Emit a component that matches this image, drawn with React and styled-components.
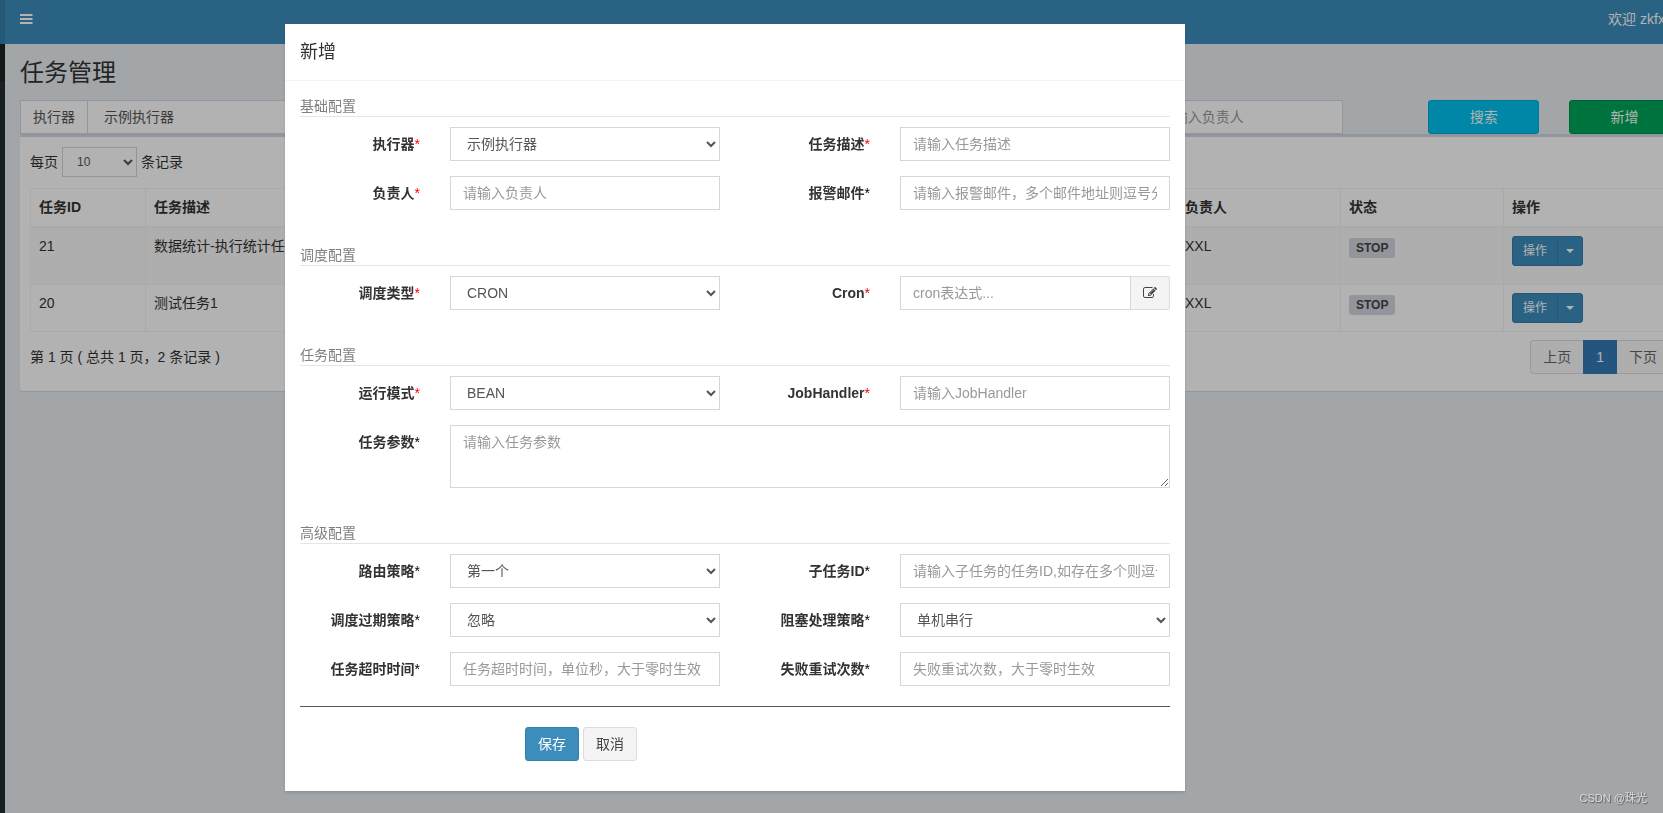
import styled, { createGlobalStyle, css } from "styled-components";

const GlobalStyle = createGlobalStyle`
  *, *::before, *::after {
    box-sizing: border-box;
  }
  body {
    margin: 0;
    overflow: hidden;
    background: #e9eef2;
    color: #333;
    font-family: "Liberation Sans", "Noto Sans CJK SC", sans-serif;
    font-size: 14px;
    line-height: 20px;
  }
  input, select, textarea, button {
    font-family: inherit;
    font-size: inherit;
    line-height: inherit;
  }
`;

/* ---------- page shell ---------- */

const Wrapper = styled.div`
  display: flex;
  width: calc(100% + 32px);
  min-height: 100vh;
`;

const Sidebar = styled.aside`
  flex: 0 0 5px;
  background: #222d32;
`;

const SidebarLogo = styled.div`
  height: 44px;
  background: #367fa9;
`;

const SidebarUser = styled.div`
  height: 37px;
  background: #1a2226;
`;

const Main = styled.div`
  flex: 1;
  min-width: 0;
`;

const TopBar = styled.header`
  display: flex;
  align-items: center;
  justify-content: space-between;
  height: 44px;
  padding: 0 20px 6px 15px;
  background: #3c8dbc;
  color: #fff;
`;

const MenuButton = styled.button`
  display: flex;
  padding: 0;
  border: 0;
  background: none;
  color: #fff;
`;

const UserLink = styled.a`
  color: #fff;
  text-decoration: none;
  white-space: nowrap;
`;

const Content = styled.main`
  padding: 15px;
`;

const PageTitle = styled.h1`
  margin: 0 0 13px;
  font-size: 24px;
  font-weight: 400;
  line-height: 28px;
`;

/* ---------- form controls ---------- */

const control = css`
  display: block;
  width: 100%;
  height: 34px;
  padding: 6px 12px;
  border: 1px solid #d2d6de;
  border-radius: 0;
  background: #fff;
  color: #555;
  outline: 0;
  &::placeholder {
    color: #999;
  }
`;

const Input = styled.input`
  ${control}
`;

const Select = styled.select`
  ${control}
`;

const TextArea = styled.textarea`
  ${control}
  height: 63px;
  resize: vertical;
`;

const variants = {
  primary: css`
    border-color: #367fa9;
    background: #3c8dbc;
    color: #fff;
  `,
  info: css`
    border-color: #00acd6;
    background: #00c0ef;
    color: #fff;
  `,
  success: css`
    border-color: #008d4c;
    background: #00a65a;
    color: #fff;
  `,
  default: css`
    border-color: #ddd;
    background: #f4f4f4;
    color: #444;
  `,
};

const Button = styled.button`
  padding: 6px 12px;
  border: 1px solid transparent;
  border-radius: 3px;
  white-space: nowrap;
  ${({ $variant }) => variants[$variant || "default"]}
`;

/* ---------- filter row ---------- */

const Filters = styled.div`
  display: grid;
  grid-template-columns: 3fr 1fr 2fr 2fr 2fr 1fr 1fr;
  margin: 0 -15px;
`;

const FilterCell = styled.div`
  display: flex;
  min-width: 0;
  padding: 0 15px;
  ${Button} {
    flex: 1;
  }
`;

const Addon = styled.label`
  padding: 6px 12px;
  border: 1px solid #d2d6de;
  border-right: 0;
  background: #fff;
  color: #555;
  white-space: nowrap;
`;

const FilterInput = styled(Input)`
  width: 196px;
`;

/* ---------- job list ---------- */

const Box = styled.section`
  padding: 10px 10px 17px;
  border-top: 3px solid #d2d6de;
  border-radius: 3px;
  background: #fff;
  box-shadow: 0 1px 1px rgba(0, 0, 0, 0.1);
`;

const LengthBar = styled.label`
  display: flex;
  align-items: center;
  gap: 4px;
  margin-bottom: 11px;
`;

const LengthSelect = styled(Select)`
  width: 75px;
  height: 30px;
  padding: 5px 10px;
  font-size: 12px;
`;

const Table = styled.table`
  width: 100%;
  table-layout: fixed;
  border-collapse: separate;
  border-spacing: 0;
  border: solid #f4f4f4;
  border-width: 1px 0 0 1px;
`;

const Th = styled.th`
  width: ${({ $width }) => ($width ? `${$width}px` : "auto")};
  padding: 8px 8px 9px;
  border: solid #f4f4f4;
  border-width: 0 1px 2px 0;
  text-align: left;
`;

const Tr = styled.tr`
  height: ${({ $tall }) => ($tall ? 57 : 47)}px;
  background: ${({ $tall }) => ($tall ? "#f9f9f9" : "#fff")};
`;

const Td = styled.td`
  padding: 8px;
  border: solid #f4f4f4;
  border-width: 0 1px 1px 0;
  vertical-align: top;
`;

const Status = styled.span`
  display: inline-block;
  margin-top: 2px;
  padding: 0 7px;
  border-radius: 3px;
  background: #d2d6de;
  color: #444;
  font-size: 12px;
  font-weight: 700;
  line-height: 20px;
`;

const ButtonGroup = styled.div`
  display: flex;
`;

const ActionButton = styled(Button)`
  height: 30px;
  padding: 0 10px;
  border-radius: 3px 0 0 3px;
  font-size: 12px;
`;

const CaretButton = styled(Button)`
  display: flex;
  align-items: center;
  height: 30px;
  margin-left: -1px;
  padding: 0 8px;
  border-radius: 0 3px 3px 0;
  &::before {
    content: "";
    border: 4px solid transparent;
    border-top-color: #fff;
    border-bottom: 0;
  }
`;

const TableFooter = styled.div`
  display: flex;
  align-items: center;
  justify-content: space-between;
  margin-top: 8px;
`;

const Pagination = styled.nav`
  display: flex;
`;

const PageButton = styled.button`
  padding: 6px 12px;
  border: 1px solid ${({ $active }) => ($active ? "#337ab7" : "#ddd")};
  background: ${({ $active }) => ($active ? "#337ab7" : "#fafafa")};
  color: ${({ $active }) => ($active ? "#fff" : "#666")};
  &:first-child {
    border-right: 0;
    border-radius: 4px 0 0 4px;
  }
  &:last-child {
    border-left: 0;
    border-radius: 0 4px 4px 0;
  }
`;

/* ---------- modal ---------- */

const Backdrop = styled.div`
  position: fixed;
  inset: 0;
  display: flex;
  align-items: flex-start;
  justify-content: center;
  padding: 24px 193px 22px 0;
  background: rgba(0, 0, 0, 0.3);
`;

const Dialog = styled.div`
  width: 900px;
  background: #fff;
  box-shadow: 0 2px 3px rgba(0, 0, 0, 0.125);
`;

const DialogHeader = styled.div`
  padding: 15px;
  border-bottom: 1px solid #f4f4f4;
`;

const DialogTitle = styled.h2`
  margin: 0;
  font-size: 18px;
  font-weight: 400;
  line-height: 26px;
`;

const DialogBody = styled.form`
  padding: 15px 15px 30px;
`;

const FieldGroup = styled.fieldset`
  min-width: 0;
  margin: 0 0 20px;
  padding: 0;
  border: 0;
  &:last-of-type {
    margin-bottom: 0;
  }
`;

const GroupTitle = styled.legend`
  width: 100%;
  margin-bottom: 10px;
  padding: 0;
  border-bottom: 1px solid #e5e5e5;
  color: #808080;
`;

const FormRow = styled.div`
  display: grid;
  grid-template-columns: 2fr 4fr 2fr 4fr;
  margin: 0 -15px 15px;
`;

const FieldLabel = styled.label`
  padding: 7px 15px 0;
  font-weight: 700;
  text-align: right;
`;

const Star = styled.span`
  color: ${({ $required }) => ($required ? "red" : "#000")};
  font-weight: 400;
`;

const FieldCell = styled.div`
  display: flex;
  grid-column: span ${({ $wide }) => ($wide ? 3 : 1)};
  min-width: 0;
  padding: 0 15px;
`;

const EditButton = styled(Button)`
  display: flex;
  align-items: center;
  border-left: 0;
  border-radius: 0 3px 3px 0;
`;

const Divider = styled.hr`
  margin: 5px 0 20px;
  border: 0;
  border-top: 1px solid #555;
`;

const Actions = styled.div`
  display: flex;
  gap: 4px;
  padding-left: 225px;
`;

const Watermark = styled.div`
  position: fixed;
  right: 16px;
  bottom: 5px;
  color: #dcdcdc;
  font-size: 11px;
  text-shadow: 1px 1px 1px #555;
`;

/* ---------- data ---------- */

const columns = [
  { title: "任务ID", width: 115 },
  { title: "任务描述", width: 380 },
  { title: "调度类型", width: 220 },
  { title: "运行模式" },
  { title: "负责人", width: 164 },
  { title: "状态", width: 163 },
  { title: "操作", width: 166 },
];

const jobs = [
  { id: 21, desc: "数据统计-执行统计任务", type: "CRON", mode: "BEAN", author: "XXL", tall: true },
  { id: 20, desc: "测试任务1", type: "CRON", mode: "BEAN", author: "XXL" },
];

const groups = [
  {
    title: "基础配置",
    rows: [
      [
        { id: "jobGroup", label: "执行器", required: true, type: "select", value: "示例执行器" },
        { id: "jobDesc", label: "任务描述", required: true, placeholder: "请输入任务描述" },
      ],
      [
        { id: "author", label: "负责人", required: true, placeholder: "请输入负责人" },
        { id: "alarmEmail", label: "报警邮件", placeholder: "请输入报警邮件，多个邮件地址则逗号分隔" },
      ],
    ],
  },
  {
    title: "调度配置",
    rows: [
      [
        { id: "scheduleType", label: "调度类型", required: true, type: "select", value: "CRON" },
        { id: "cron", label: "Cron", required: true, type: "cron", placeholder: "cron表达式..." },
      ],
    ],
  },
  {
    title: "任务配置",
    rows: [
      [
        { id: "glueType", label: "运行模式", required: true, type: "select", value: "BEAN" },
        { id: "handler", label: "JobHandler", required: true, placeholder: "请输入JobHandler" },
      ],
      [{ id: "param", label: "任务参数", type: "textarea", placeholder: "请输入任务参数" }],
    ],
  },
  {
    title: "高级配置",
    rows: [
      [
        { id: "route", label: "路由策略", type: "select", value: "第一个" },
        { id: "childJobId", label: "子任务ID", placeholder: "请输入子任务的任务ID,如存在多个则逗号分隔" },
      ],
      [
        { id: "misfire", label: "调度过期策略", type: "select", value: "忽略" },
        { id: "block", label: "阻塞处理策略", type: "select", value: "单机串行" },
      ],
      [
        { id: "timeout", label: "任务超时时间", placeholder: "任务超时时间，单位秒，大于零时生效" },
        { id: "retry", label: "失败重试次数", placeholder: "失败重试次数，大于零时生效" },
      ],
    ],
  },
];

/* ---------- components ---------- */

const BarsIcon = () => (
  <svg width="13" height="10" viewBox="0 0 13 10" fill="currentColor" aria-hidden="true">
    <path d="M0 0h12.5v2H0zM0 4h12.5v2H0zM0 8h12.5v2H0z" />
  </svg>
);

const EditIcon = () => (
  <svg width="14" height="14" viewBox="0 0 1792 1792" fill="currentColor" aria-hidden="true">
    <path d="M888 1184l116-116-152-152-116 116v56h96v96h56zm440-720q-16-16-33 1l-350 350q-17 17-1 33t33-1l350-350q17-17 1-33zm80 594v190q0 119-84.5 203.5t-203.5 84.5h-832q-119 0-203.5-84.5t-84.5-203.5v-832q0-119 84.5-203.5t203.5-84.5h832q63 0 117 25 15 7 18 23 3 17-9 29l-49 49q-14 14-32 8-23-6-45-6h-832q-66 0-113 47t-47 113v832q0 66 47 113t113 47h832q66 0 113-47t47-113v-126q0-13 9-22l64-64q15-15 35-7t20 29zm-96-738l288 288-672 672h-288v-288zm444 132l-92 92-288-288 92-92q28-28 68-28t68 28l152 152q28 28 28 68t-28 68z" />
  </svg>
);

const Control = ({ field }) => {
  const { id, type, value, placeholder } = field;
  if (type === "select") {
    return (
      <Select id={id}>
        <option>{value}</option>
      </Select>
    );
  }
  if (type === "textarea") {
    return <TextArea id={id} placeholder={placeholder} />;
  }
  return (
    <>
      <Input id={id} type="text" placeholder={placeholder} />
      {type === "cron" && (
        <EditButton type="button" aria-label="编辑">
          <EditIcon />
        </EditButton>
      )}
    </>
  );
};

const Field = ({ field }) => (
  <>
    <FieldLabel htmlFor={field.id}>
      {field.label}
      <Star $required={field.required}>*</Star>
    </FieldLabel>
    <FieldCell $wide={field.type === "textarea"}>
      <Control field={field} />
    </FieldCell>
  </>
);

const JobFilters = () => (
  <Filters>
    <FilterCell>
      <Addon htmlFor="filterGroup">执行器</Addon>
      <Select id="filterGroup">
        <option>示例执行器</option>
      </Select>
    </FilterCell>
    <FilterCell>
      <Select aria-label="状态">
        <option>全部</option>
      </Select>
    </FilterCell>
    <FilterCell>
      <FilterInput type="text" aria-label="任务描述" placeholder="请输入任务描述" />
    </FilterCell>
    <FilterCell>
      <FilterInput type="text" aria-label="JobHandler" placeholder="请输入JobHandler" />
    </FilterCell>
    <FilterCell>
      <FilterInput type="text" aria-label="负责人" placeholder="请输入负责人" />
    </FilterCell>
    <FilterCell>
      <Button $variant="info">搜索</Button>
    </FilterCell>
    <FilterCell>
      <Button $variant="success">新增</Button>
    </FilterCell>
  </Filters>
);

const JobTable = () => (
  <Box>
    <LengthBar>
      每页
      <LengthSelect>
        <option>10</option>
      </LengthSelect>
      条记录
    </LengthBar>
    <Table>
      <thead>
        <tr>
          {columns.map((column) => (
            <Th key={column.title} $width={column.width}>
              {column.title}
            </Th>
          ))}
        </tr>
      </thead>
      <tbody>
        {jobs.map((job) => (
          <Tr key={job.id} $tall={job.tall}>
            <Td>{job.id}</Td>
            <Td>{job.desc}</Td>
            <Td>{job.type}</Td>
            <Td>{job.mode}</Td>
            <Td>{job.author}</Td>
            <Td>
              <Status>STOP</Status>
            </Td>
            <Td>
              <ButtonGroup>
                <ActionButton $variant="primary">操作</ActionButton>
                <CaretButton $variant="primary" aria-label="更多操作" />
              </ButtonGroup>
            </Td>
          </Tr>
        ))}
      </tbody>
    </Table>
    <TableFooter>
      <span>第 1 页 ( 总共 1 页，2 条记录 )</span>
      <Pagination>
        <PageButton>上页</PageButton>
        <PageButton $active>1</PageButton>
        <PageButton>下页</PageButton>
      </Pagination>
    </TableFooter>
  </Box>
);

const AddJobModal = () => (
  <Backdrop>
    <Dialog role="dialog" aria-labelledby="addJobTitle">
      <DialogHeader>
        <DialogTitle id="addJobTitle">新增</DialogTitle>
      </DialogHeader>
      <DialogBody>
        {groups.map((group) => (
          <FieldGroup key={group.title}>
            <GroupTitle>{group.title}</GroupTitle>
            {group.rows.map((row) => (
              <FormRow key={row[0].id}>
                {row.map((field) => (
                  <Field key={field.id} field={field} />
                ))}
              </FormRow>
            ))}
          </FieldGroup>
        ))}
        <Divider />
        <Actions>
          <Button type="button" $variant="primary">
            保存
          </Button>
          <Button type="button">取消</Button>
        </Actions>
      </DialogBody>
    </Dialog>
  </Backdrop>
);

const App = () => {
  return (
    <>
      <GlobalStyle />
      <Wrapper>
        <Sidebar>
          <SidebarLogo />
          <SidebarUser />
        </Sidebar>
        <Main>
          <TopBar>
            <MenuButton aria-label="菜单">
              <BarsIcon />
            </MenuButton>
            <UserLink href="#user">欢迎 zkfxxl</UserLink>
          </TopBar>
          <Content>
            <PageTitle>任务管理</PageTitle>
            <JobFilters />
            <JobTable />
          </Content>
        </Main>
      </Wrapper>
      <AddJobModal />
      <Watermark>CSDN @珠光</Watermark>
    </>
  );
};

export default App;
